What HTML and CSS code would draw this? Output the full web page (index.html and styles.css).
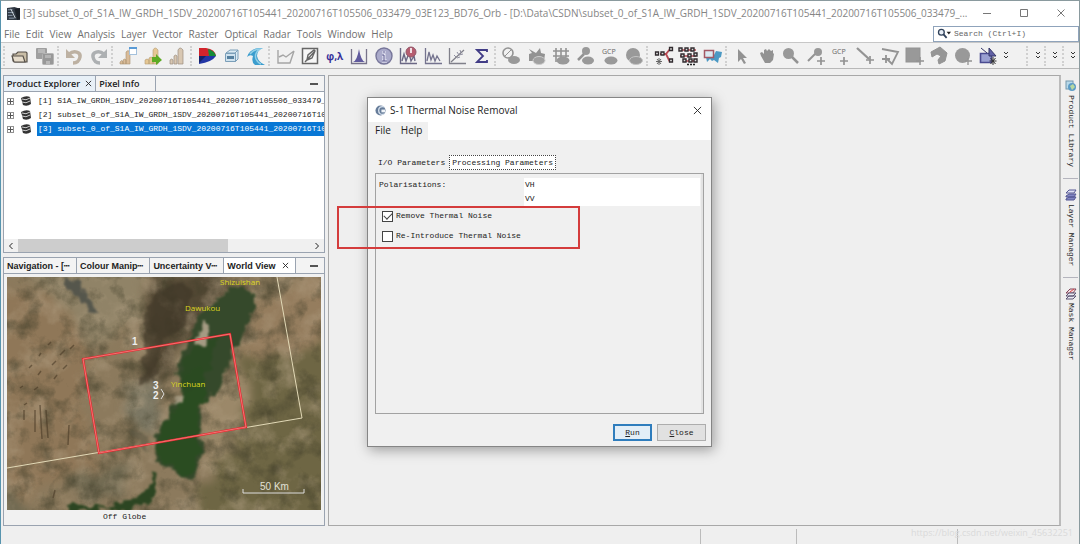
FILE: index.html
```html
<!DOCTYPE html>
<html lang="en">
<head>
<meta charset="utf-8">
<title>S-1 Thermal Noise Removal</title>
<link rel="stylesheet" href="styles.css">
</head>
<body>
<div class="app">
  <header class="titlebar">
    <svg class="app-icon" viewBox="0 0 14 14"><path d="M0 1l8-1 6 2v12H0z" fill="#333b45"/><path d="M8 2l6-1v12l-3 1z" fill="#1b2028"/><path d="M1 3h5M1 6h6M1 9h5M2 12h6" stroke="#91a0b3"/><path d="M4 2l5 10" stroke="#d6dee6"/></svg>
    <span class="title-text">[3] subset_0_of_S1A_IW_GRDH_1SDV_20200716T105441_20200716T105506_033479_03E123_BD76_Orb - [D:\Data\CSDN\subset_0_of_S1A_IW_GRDH_1SDV_20200716T105441_20200716T105506_033479_...</span>
    <div class="window-controls">
      <button aria-label="Minimize"><svg viewBox="0 0 10 10"><path d="M1 5.500h8"/></svg></button>
      <button aria-label="Maximize"><svg viewBox="0 0 10 10"><path d="M1.500 1.500h7v7h-7z"/></svg></button>
      <button aria-label="Close window"><svg viewBox="0 0 10 10"><path d="M1.500 1.500l7 7M8.500 1.500l-7 7"/></svg></button>
    </div>
  </header>

  <nav class="menubar">
    <button>File</button><button>Edit</button><button>View</button><button>Analysis</button><button>Layer</button><button>Vector</button><button>Raster</button><button>Optical</button><button>Radar</button><button>Tools</button><button>Window</button><button>Help</button>
    <label class="search">
      <svg viewBox="0 0 16 12"><circle cx="5" cy="4.500" r="3.300" fill="#e8eef6" stroke="#2f4059" stroke-width="1.500"/><path d="M7.500 7l3.500 4" stroke="#2f4059" stroke-width="2"/><path d="M11 4h5l-2.500 3z" fill="#222"/></svg>
      <input type="text" placeholder="Search (Ctrl+I)" aria-label="Search">
    </label>
  </nav>

  <div class="toolbar">
    <span class="grip"></span>
    <div class="group g2">
      <button aria-label="Open product"><svg viewBox="0 0 20 20"><path d="M3 15V8h3l2-2h8l1 1v9H5z" fill="#c9bda6" stroke="#57514a" stroke-width="1.200"/><path d="M2 10h11l2 6H4z" fill="#e6dccb" stroke="#57514a" stroke-width="1.200"/></svg></button>
      <button aria-label="Save all"><svg viewBox="0 0 20 20"><rect x="1" y="2" width="11" height="11" rx="1" fill="#9f9f9f"/><rect x="3" y="3" width="7" height="4" fill="#b9b9b9"/><rect x="7.500" y="7.500" width="11" height="11" rx="1" fill="#989898" stroke="#b4b4b4"/><rect x="10" y="9" width="6" height="3" fill="#b4b4b4"/><rect x="11" y="15" width="4" height="3" fill="#b8b8b8"/></svg></button>
    </div>
    <span class="grip"></span>
    <div class="group g2">
      <button aria-label="Undo"><svg viewBox="0 0 20 20"><path d="M5 8c5-4 12-2 11 3s-4 6-7 6" fill="none" stroke="#bdb1a2" stroke-width="3.500"/><path d="M2 3v9h9z" fill="#bdb1a2"/></svg></button>
      <button aria-label="Redo"><svg viewBox="0 0 20 20"><path d="M15 8C10 4 3 6 4 11s4 6 7 6" fill="none" stroke="#adb0b2" stroke-width="3.500"/><path d="M18 3v9H9z" fill="#adb0b2"/></svg></button>
    </div>
    <span class="grip"></span>
    <div class="group g3">
      <button aria-label="New histogram"><svg viewBox="0 0 20 20"><path d="M2 16q2-3 3 0v2H2zM5 18v-4q2-2 3 0v4zM8 18V6q2-3 4 0v12z" fill="#d9bb98" stroke="#a89070" stroke-width=".6"/><rect x="11.500" y="1.500" width="7" height="7" fill="#fff" stroke="#a4c1dc"/><path d="M11 2h8" stroke="#5b9bd5" stroke-width="2"/></svg></button>
      <button aria-label="Import"><svg viewBox="0 0 20 20"><path d="M2 18v-4q2-2 4 0v4zM6 18v-6q2-2 4 0v6zM10 18V4q2-4 5 0v14z" fill="#e5c793" stroke="#b39b74" stroke-width=".6"/><path d="M9 11h4V8l6 6-6 5v-3H9z" fill="#5dab24"/></svg></button>
      <button aria-label="Export"><svg viewBox="0 0 20 20"><path d="M3 18v-4q2-2 3 0v4zM7 18v-8q2-2 3 0v8zM11 18V4q2-4 5 0v14z" fill="#d8c7b2" stroke="#9b8e80" stroke-width=".7"/></svg></button>
    </div>
    <span class="grip"></span>
    <div class="group g3">
      <button aria-label="RGB image"><svg viewBox="0 0 20 20"><path d="M2 2h7q9 1 10 8H2z" fill="#d2242c"/><path d="M11 3q7 2 8 7h-7z" fill="#168b37"/><path d="M2 10h17q-4 6-17 8z" fill="#2336a5"/><path d="M2 10h7l-7 7z" fill="#152268"/></svg></button>
      <button aria-label="3D cube"><svg viewBox="0 0 20 20"><path d="M4 7l4-3h8l-3 3zM13 7l3-3v9l-3 3z" fill="#dcebf3" stroke="#7b9fb9"/><path d="M3.500 7.500h10v8h-10z" fill="#cfe2ee" stroke="#7b9fb9"/><path d="M5 10h7v3H5z" fill="#55809f"/></svg></button>
      <button aria-label="Water tool"><svg viewBox="0 0 20 20"><path d="M1 11Q4 1 17 2q-6 2-6 8 1 6 8 9H9q-4-3-2-9-3-2-6 1z" fill="#3b9dce"/><path d="M4 8q4-5 10-5-6 4-4 10 2 4 5 5" fill="none" stroke="#93d0e8" stroke-width="1.500"/></svg></button>
    </div>
    <span class="grip"></span>
    <div class="group g9">
      <button aria-label="Profile plot"><svg viewBox="0 0 20 20"><path d="M2 4v13h12l4-12M3 11l4-2 3 2 8-6" fill="none" stroke="#a5a5a5" stroke-width="1.400"/></svg></button>
      <button aria-label="Geometry"><svg viewBox="0 0 20 20"><rect x="2.500" y="2.500" width="15" height="15" fill="#f7f7f7" stroke="#666" stroke-width="1.500"/><path d="M5 16L15 5M7 14l1-5 6-5 1 1-3 7z" fill="none" stroke="#666" stroke-width="1.400"/></svg></button>
      <button aria-label="Geo coding" class="phi">φ,λ</button>
      <button aria-label="Histogram"><svg viewBox="0 0 20 20"><path d="M4 16q4-1 6-13 2 12 6 13z" fill="#605a9e"/><path d="M2.500 3v14.500h15V3" fill="none" stroke="#77738a" stroke-width="1.300"/></svg></button>
      <button aria-label="Information"><svg viewBox="0 0 20 20"><circle cx="10" cy="10" r="8" fill="#aaaaca" stroke="#77769a" stroke-width="1.400"/><path d="M10 5v2M8 9h2v6M8 15h5" stroke="#e9e9f6" stroke-width="3"/><path d="M10 5v2M8 9h2v6M8 15h5" stroke="#57558a"/></svg></button>
      <button aria-label="Density plot"><svg viewBox="0 0 20 20"><path d="M2.500 2v15.500H19M4 15l2-7 2 7 3-8 2 8 3-5 1 5" fill="none" stroke="#6b6885" stroke-width="1.400"/><circle cx="13" cy="6" r="5" fill="#b65d70" stroke="#915668"/><path d="M13 2v5" stroke="#f1dfe4" stroke-width="2"/></svg></button>
      <button aria-label="Spectrum"><svg viewBox="0 0 20 20"><path d="M2.500 2v15.500H19M4 15l2-9 2 8 2-5 2 6 2-5 3 5" fill="none" stroke="#74738e" stroke-width="1.300"/></svg></button>
      <button aria-label="Scatter plot"><svg viewBox="0 0 20 20"><path d="M2.500 2v15.500H19M4 16L17 4" fill="none" stroke="#80808a" stroke-width="1.300"/><path d="M7 9l2 2M10 6l2 3M13 4l1 3M10 12l3-1M12 9l4-1" stroke="#8f8fa0"/></svg></button>
      <button aria-label="Statistics"><svg viewBox="0 0 20 20"><path d="M15 6V4H5l6 6-6 6h10v-2" fill="none" stroke="#413c86" stroke-width="1.800"/></svg></button>
    </div>
    <span class="grip"></span>
    <div class="group g6 muted">
      <button aria-label="No data overlay"><svg viewBox="0 0 20 20"><circle cx="7" cy="7" r="5" fill="none" stroke-width="1.600"/><path d="M3 11l8-8"/><ellipse cx="13" cy="14" rx="6" ry="4" fill="#999" stroke="none"/></svg></button>
      <button aria-label="Geometry overlay"><svg viewBox="0 0 20 20"><path d="M3 8l3-1-3-4 7 4 4-5 1 5 4 1-1 7H3z" fill="#929292" stroke="none"/><ellipse cx="13" cy="14.500" rx="6" ry="4" fill="#a0a0a0" stroke="#ccc"/></svg></button>
      <button aria-label="Graticule overlay"><svg viewBox="0 0 20 20"><path d="M2 5h16M2 10h16M5 2v14M10 2v10M15 2v9" stroke-width="1.600"/><ellipse cx="12" cy="14.500" rx="6.500" ry="4" fill="#999" stroke="none"/></svg></button>
      <button aria-label="Pin overlay"><svg viewBox="0 0 20 20"><circle cx="11" cy="5" r="4" fill="#999" stroke="none"/><path d="M9 8l-6 6" stroke-width="2.500"/><ellipse cx="13" cy="14.500" rx="6" ry="4" fill="#999" stroke="none"/></svg></button>
      <button aria-label="GCP overlay"><svg viewBox="0 0 20 20"><text x="2" y="8" class="gcp">GCP</text><ellipse cx="11" cy="14.500" rx="6.500" ry="4" fill="#999" stroke="none"/></svg></button>
      <button aria-label="Mask overlay"><svg viewBox="0 0 20 20"><circle cx="9" cy="9" r="7" fill="#999" stroke="none"/><ellipse cx="12" cy="14.500" rx="6.500" ry="4" fill="#999" stroke="#c4c4c4"/></svg></button>
    </div>
    <span class="grip"></span>
    <div class="group g3">
      <button aria-label="Graph builder"><svg viewBox="0 0 20 20"><path d="M6 8h6l4-5M12 8l4 8" fill="none" stroke="#b84852" stroke-width="1.800"/><g fill="#ddd" stroke="#302a2e" stroke-width="1.300"><path d="M1.500 6h3v3h-3zM7 6h3v3H7zM15.500 1.500h3v3h-3zM15.500 13h3v3h-3z"/></g><path d="M5 12v7M2 15.500h6M3 13l4 5M7 13l-4 5" stroke="#666"/></svg></button>
      <button aria-label="Batch processing"><svg viewBox="0 0 20 20"><path d="M2 4h16M2 10h16M7 15h12" stroke="#b84852" stroke-width="1.500"/><g fill="#ddd" stroke="#302a2e" stroke-width="1.400"><path d="M1 2h3v3H1zM7 2h3v3H7zM13 2h3v3h-3zM3 8h3v3H3zM10 8h3v3h-3zM16 7h3v3h-3zM5 13h3v3H5zM11 13h3v3h-3zM16 13h3v3h-3z"/></g><path d="M9 18.500h8" stroke="#222" stroke-width="1.500" stroke-dasharray="2 1"/></svg></button>
      <button aria-label="World map"><svg viewBox="0 0 20 20"><path d="M3 11l4-2 3 2 3-6 6 1-1 5-2 1-1 5-4-3-2 1-2-2-3 3z" fill="#4b99c4"/><rect x="1.500" y="4.500" width="9" height="7" fill="#dbe9f1" stroke="#a35864" stroke-width="1.500"/></svg></button>
    </div>
    <span class="grip"></span>
    <div class="group g11 muted">
      <button aria-label="Select"><svg viewBox="0 0 20 20"><path d="M6 3v13l3-3 3 5 2-1-3-5h4z" fill="#929292" stroke="none"/></svg></button>
      <button aria-label="Pan"><svg viewBox="0 0 20 20"><path d="M4 10l-1-3 2-1 2 2V4l2-1 1 2 2-2 2 2 2-1v3l1 1-1 6-3 3H8z" fill="#929292" stroke="none"/></svg></button>
      <button aria-label="Zoom"><svg viewBox="0 0 20 20"><circle cx="7.500" cy="7.500" r="5.500" fill="#999" stroke="none"/><path d="M11 11l6 6" stroke-width="2.500"/></svg></button>
      <button aria-label="Pin placing"><svg viewBox="0 0 20 20"><circle cx="12" cy="6" r="4" fill="#999" stroke="none"/><path d="M9 8l-7 7" stroke-width="2"/><path d="M15 11v8M11 15h8" stroke-width="1.700"/></svg></button>
      <button aria-label="GCP placing"><svg viewBox="0 0 20 20"><text x="2" y="8" class="gcp">GCP</text><path d="M14 11v8M10 15h8" stroke-width="1.700"/></svg></button>
      <button aria-label="Draw line"><svg viewBox="0 0 20 20"><path d="M2 2l12 11" stroke-width="2.300"/><path d="M15 10v8M11 14h8" stroke-width="1.700"/></svg></button>
      <button aria-label="Draw polyline"><svg viewBox="0 0 20 20"><path d="M2 3l16 3-6 12-5-5M6 9v8M2 13h8" fill="none" stroke-width="1.800"/></svg></button>
      <button aria-label="Draw rectangle"><svg viewBox="0 0 20 20"><rect x="2" y="2" width="14" height="14" fill="#999"/><path d="M16 11v8M12 15h8" stroke-width="1.500"/></svg></button>
      <button aria-label="Draw polygon"><svg viewBox="0 0 20 20"><path d="M2 6l9-5 7 6-2 8-6 3-1-4 3-4-4-2-5 3z" fill="#969696"/></svg></button>
      <button aria-label="Draw ellipse"><svg viewBox="0 0 20 20"><circle cx="9.500" cy="9.500" r="7.500" fill="#999" stroke="none"/><path d="M15 12v7M12 15h7" stroke-width="1.300"/></svg></button>
      <button aria-label="New vector layer"><svg viewBox="0 0 20 20"><path d="M2.500 7.500h11v9h-11z" fill="#9aa0d2" stroke="#4b4c91" stroke-width="1.600"/><path d="M3 2l6 5M11 2l7 8h-7z" fill="#6262a6" stroke="#343668"/><path d="M15 11v8M11.500 15h7M12.500 12l5 6M17.500 12l-5 6" stroke="#333" stroke-width="1"/></svg></button>
    </div>
    <div class="overflow">
      <button aria-label="More tools"><svg viewBox="0 0 8 12"><path d="M2 2l2 2 2-2M2 6l2 2 2-2"/></svg></button>
      <span class="grip"></span><button aria-label="More views"><svg viewBox="0 0 8 12"><path d="M2 2l2 2 2-2M2 6l2 2 2-2"/></svg></button>
      <span class="grip"></span><button aria-label="More layers"><svg viewBox="0 0 8 12"><path d="M2 2l2 2 2-2M2 6l2 2 2-2"/></svg></button>
      <span class="grip"></span><button aria-label="More actions"><svg viewBox="0 0 8 12"><path d="M2 2l2 2 2-2M2 6l2 2 2-2"/></svg></button>
    </div>
  </div>

  <main class="workspace">
    <div class="sidebar">
      <section class="panel explorer">
        <div class="tabs top-tabs">
          <button class="tab active">Product Explorer <svg class="x" viewBox="0 0 8 8"><path d="M1 1l6 6M7 1L1 7"/></svg></button>
          <button class="tab wide">Pixel Info</button>
          <button class="collapse" aria-label="Minimize panel"></button>
        </div>
        <ul class="tree">
          <li><button class="expand" aria-label="Expand"></button><svg class="db" viewBox="0 0 12 12"><path d="M1 3q5-3 9-1l1 7q-4 3-8 1z" fill="#333"/><path d="M2 4q4 2 8-1M2 7q4 2 8-1" stroke="#ccc" fill="none"/></svg><span>[1] S1A_IW_GRDH_1SDV_20200716T105441_20200716T105506_033479_0</span></li>
          <li><button class="expand" aria-label="Expand"></button><svg class="db" viewBox="0 0 12 12"><path d="M1 3q5-3 9-1l1 7q-4 3-8 1z" fill="#333"/><path d="M2 4q4 2 8-1M2 7q4 2 8-1" stroke="#ccc" fill="none"/></svg><span>[2] subset_0_of_S1A_IW_GRDH_1SDV_20200716T105441_20200716T105</span></li>
          <li class="selected"><button class="expand" aria-label="Expand"></button><svg class="db" viewBox="0 0 12 12"><path d="M1 3q5-3 9-1l1 7q-4 3-8 1z" fill="#333"/><path d="M2 4q4 2 8-1M2 7q4 2 8-1" stroke="#ccc" fill="none"/></svg><span>[3] subset_0_of_S1A_IW_GRDH_1SDV_20200716T105441_20200716T105</span></li>
        </ul>
        <div class="scrollbar">
          <button aria-label="Scroll left"><svg viewBox="0 0 8 8"><path d="M5.500 1l-3 3 3 3"/></svg></button>
          <div class="track"><div class="thumb"></div></div>
          <button aria-label="Scroll right"><svg viewBox="0 0 8 8"><path d="M2.500 1l3 3-3 3"/></svg></button>
        </div>
      </section>

      <section class="panel world">
        <div class="tabs bottom-tabs">
          <button class="tab">Navigation - [┅</button>
          <button class="tab">Colour Manip┅</button>
          <button class="tab">Uncertainty V┅</button>
          <button class="tab current">World View <svg class="x" viewBox="0 0 8 8"><path d="M1 1l6 6M7 1L1 7"/></svg></button>
          <button class="collapse" aria-label="Minimize panel"></button>
        </div>
        <svg class="map" viewBox="7 277 314 233" preserveAspectRatio="xMidYMid slice" role="img" aria-label="Satellite map">
          <defs>
            <filter id="rough" x="-10%" y="-10%" width="120%" height="120%" color-interpolation-filters="sRGB"><feTurbulence type="fractalNoise" baseFrequency=".09" numOctaves="4" seed="4"/><feDisplacementMap in="SourceGraphic" scale="14" xChannelSelector="R" yChannelSelector="G"/><feGaussianBlur stdDeviation=".8"/></filter>
            <filter id="soft" x="-20%" y="-20%" width="140%" height="140%" color-interpolation-filters="sRGB"><feTurbulence type="fractalNoise" baseFrequency=".05" numOctaves="4" seed="9"/><feDisplacementMap in="SourceGraphic" scale="28" xChannelSelector="R" yChannelSelector="G"/><feGaussianBlur stdDeviation="4"/></filter>
            <filter id="dark" x="0" y="0" width="100%" height="100%" color-interpolation-filters="sRGB"><feTurbulence type="fractalNoise" baseFrequency=".05" numOctaves="5" seed="12"/><feColorMatrix values="0 0 0 0 .25  0 0 0 0 .24  0 0 0 0 .16  2.600 0 0 0 -1.200"/></filter>
            <filter id="light" x="0" y="0" width="100%" height="100%" color-interpolation-filters="sRGB"><feTurbulence type="fractalNoise" baseFrequency=".04" numOctaves="5" seed="31"/><feColorMatrix values="0 0 0 0 .7  0 0 0 0 .63  0 0 0 0 .52  0 2.600 0 0 -1.200"/></filter>
          </defs>
          <rect x="7" y="277" width="314" height="233" fill="#8c7a5d"/>
          <g filter="url(#soft)">
            <path d="M-10 290l65 0 40 60-15 50 20 60-110 60z" fill="#8f7758"/>
            <path d="M20 260l130 0-10 60-40 30-40-40z" fill="#908367"/>
            <path d="M240 355l100-20v200l-160 0 30-60z" fill="#6e6644"/>
            <path d="M258 300l70-30v70l-70 20-14-10z" fill="#957d5e"/>
            <path d="M155 270l75 0-15 48-40 35-20 45-14-10z" fill="#544935"/>
            <path d="M125 385l34 0 0 35-22 15z" fill="#7b7763"/>
            <path d="M203 405l40-40 5 60-40 45z" fill="#9b8869"/>
            <path d="M-5 465l40 60H-5zM70 475l60-10 0 30-50 5z" fill="#716a52"/>
          </g>
          <rect x="7" y="277" width="314" height="233" filter="url(#light)" opacity=".5"/>
          <rect x="7" y="277" width="314" height="233" filter="url(#dark)" opacity=".6"/>
          <g filter="url(#rough)">
            <path d="M160 290l24-8 8 10-5 28-26 25-7 35-14 5 5-34-2-25 6-24z" fill="#3d3626" opacity=".6"/>
            <path d="M230 286l18 2 8 16-8 20-10 19-8 17-10 25-19 22 1 46-5 21-9 7-14-10-17-8-1-30 14-22 10-12 1-18-6-8 12-28 7-22 10-15 18-11z" fill="#35492b"/>
            <path d="M185 375l20-12 2 35-10 14 2 42-4 16-9 7-13-10-14-8 0-28 12-18 10-8z" fill="#284c20" opacity=".85"/>
            <path d="M183 361l20-22 12-2-4 34-20 20-12-3z" fill="#2b4a22" opacity=".8"/>
            <path d="M152 470l5 3-2 20-14 13-20 4-20 0 20-7 22-8 8-12zM68 512l6-8 20 0 10 6z" fill="#2c4522"/>
            <path d="M203 320l6 5-3 20-5 4-4-7zM178 395l6 0-2 11-6 1z" fill="#a59b83"/>
            <path d="M65 277l14 5 14 22 5 10-8 0-10-18-14-8z" fill="#55564c"/>
            <path d="M126 430l15-2 8 24-14-12z" fill="#5e5845" opacity=".6"/>
          </g>
          <path d="M24 405l3-2M35 410v22M40 405l2 34M46 410l2 28M69 425l-1 20M24 410v10M29 368l3-3M38 375l3-4M52 365l4-4M60 355l5-5M20 388l3-2M34 390l4-3M70 349l4-4M39 356l2-3M54 379l3-4M63 369l4-4M48 345l3-3M53 498l2-8" stroke="#493a26" stroke-width="1.500" opacity=".6"/>
          <path d="M277 277l25 141L7 468" fill="none" stroke="#e2d9b7"/>
          <path d="M83 359l147-25 16 93-147 26z" fill="none" stroke="#e8252d" stroke-width="2.200"/>
          <path d="M83 359l147-25 16 93-147 26z" fill="none" stroke="#f5a9a1" stroke-width=".6"/>
          <g class="place"><text x="220" y="285">Shizuishan</text><text x="185" y="311">Dawukou</text><text x="171" y="387">Yinchuan</text></g>
          <g class="marker"><text x="132" y="345">1</text><text x="153" y="389">3</text><text x="153" y="399">2</text></g>
          <path d="M161 389l3 5-3 5M243 489v4h61v-4" fill="none" stroke="#ddd"/>
          <text class="scale" x="260" y="490">50 Km</text>
        </svg>
        <div class="globe-status">Off Globe</div>
      </section>
    </div>

    <div class="desktop"></div>

    <aside class="rail">
      <button><svg viewBox="0 0 12 12"><rect x="1" y="1" width="7" height="8" fill="#b8d9ea" stroke="#7597ac"/><circle cx="7" cy="7" r="4" fill="#5b9bc6"/><path d="M5 6l3-2 2 3-3 3z" fill="#b7d9a0"/></svg>Product Library</button>
      <button><svg viewBox="0 0 12 12"><path d="M1 4l3-3h7l-2 3z" fill="#dfe1f6" stroke="#555793"/><path d="M1 7l3-2h7l-2 3H1zM1 10l3-2h7l-2 3H1z" fill="#8287c4" stroke="#555793"/></svg>Layer Manager</button>
      <button><svg viewBox="0 0 12 12"><path d="M1 5l4-4h6L8 5z" fill="#f3dfe4" stroke="#80475b"/><path d="M1 8l3-3h7L8 8zM1 11l3-3h7l-3 3z" fill="#e9eaf3" stroke="#5d5573"/><path d="M5 4l4-3" stroke="#d44"/></svg>Mask Manager</button>
    </aside>
  </main>

  <footer class="statusbar"><span></span><span></span><span></span><span></span><div class="watermark">https://blog.csdn.net/weixin_45632251</div></footer>

  <section class="dialog" role="dialog" aria-labelledby="dialog-title">
    <header class="dialog-title">
      <svg viewBox="0 0 12 12"><circle cx="6" cy="6" r="5.500" fill="#667c99"/><path d="M10 2Q4 1 4 6t6 4" fill="none" stroke="#d5e0ed" stroke-width="1.500"/><path d="M7 5h4v3H7z" fill="#eef3f8"/></svg>
      <h1 id="dialog-title">S-1 Thermal Noise Removal</h1>
      <button aria-label="Close dialog"><svg viewBox="0 0 10 10"><path d="M1 1l8 8M9 1L1 9"/></svg></button>
    </header>
    <nav class="dialog-menu"><div><button>File</button><button>Help</button></div></nav>
    <div class="dialog-body">
      <div class="dialog-tabs"><button>I/O Parameters</button><button class="on">Processing Parameters</button></div>
      <form class="params">
        <div class="pol"><label for="pol">Polarisations:</label><select id="pol" multiple size="2"><option>VH</option><option>VV</option></select></div>
        <label class="check"><input type="checkbox" checked>Remove Thermal Noise</label>
        <label class="check"><input type="checkbox">Re-Introduce Thermal Noise</label>
      </form>
      <div class="actions"><button class="primary"><u>R</u>un</button><button><u>C</u>lose</button></div>
    </div>
    <div class="highlight"></div>
  </section>
</div>
</body>
</html>
```
FILE: styles.css
```css
* { box-sizing: border-box; }
body { margin: 0; background: #efefef; color: #222; font: 8px/14px "Liberation Mono", monospace; }
button { border: 0; padding: 0; margin: 0; background: none; color: inherit; font: inherit; white-space: nowrap; }
button svg { display: block; fill: none; stroke: currentColor; }
.app { position: relative; display: flex; flex-direction: column; min-height: 100vh; border: 1px solid #8a9a9e; border-left-color: #5794ae; border-bottom-color: #c8c8c8; overflow: hidden; }

.titlebar { display: flex; align-items: center; height: 24px; padding-left: 6px; background: #fff; color: #858585; font: 10px/16px "Open Sans", sans-serif; }
.app-icon { width: 13px; height: 13px; margin-right: 3px; flex: none; }
.title-text { flex: 1; min-width: 0; white-space: nowrap; }
.window-controls { display: flex; }
.window-controls button { width: 37px; display: grid; place-items: center; color: #777; }
.window-controls svg { width: 10px; height: 10px; }

.menubar { display: flex; align-items: center; gap: 6px; height: 17px; padding-left: 3px; background: #fff; color: #6f6f6f; font: 10px/16px "Open Sans", sans-serif; }
.search { display: flex; align-items: center; width: 146px; height: 16px; margin-left: auto; border: 1px solid #8fa3bb; background: #fff; padding-left: 3px; }
.search svg { width: 14px; height: 11px; }
.search input { flex: 1; min-width: 0; border: 0; outline: 0; padding: 0 0 0 3px; background: none; font: 8px/12px "Liberation Mono", monospace; }
.search input::placeholder { color: #666; opacity: 1; }

.toolbar { display: flex; align-items: center; height: 27px; padding-left: 2px; border-top: 1px solid #c7c7c7; border-bottom: 1px solid #b8b8b8; background: #f1f1f1; }
.grip { flex: none; width: 5px; height: 20px; border-left: 2px dotted #d0d0d0; }
.group { display: flex; min-width: 0; }
.group button { flex: 1; min-width: 0; display: grid; place-items: center; }
.group svg { width: 20px; height: 20px; stroke: none; overflow: visible; }
.g2 { flex: 2 1 0; }
.g3 { flex: 3 1 0; }
.g6 { flex: 6 1 0; }
.g9 { flex: 9 1 0; }
.g11 { flex: 11 1 0; }
.muted svg { stroke: #939393; }
.gcp { font: 7px "Open Sans", sans-serif; fill: #666; stroke: none; }
.phi { color: #35309a; font: bold 10px/20px "Open Sans", sans-serif; }
.overflow { display: flex; align-items: center; justify-content: space-between; width: 79px; padding: 0 2px; color: #333; }
.overflow svg { width: 8px; height: 12px; }
.overflow button:first-child { margin-right: 14px; }

.workspace { flex: 1; display: flex; padding: 6px 1px 1px 2px; }
.sidebar { width: 322px; flex: none; display: flex; flex-direction: column; gap: 4px; }
.panel { display: flex; flex-direction: column; border: 1px solid #9aa3b0; min-width: 0; }
.explorer { flex: 1; min-height: 178px; background: #fff; }
.tabs { display: flex; height: 16px; border-bottom: 1px solid #9aa3b0; background: #f3f3f3; }
.tab { display: flex; align-items: center; gap: 5px; padding: 0 3px; border-right: 1px solid #9aa3b0; }
.top-tabs { font: 600 9px/14px "Open Sans", sans-serif; }
.bottom-tabs { font: bold 9px/14px "Liberation Sans", "DejaVu Sans", sans-serif; }
.bottom-tabs .tab { flex: 1 1 auto; }
.tab.active { background: #e8f0f7; }
.tab.current { gap: 6px; background: #fff; }
.tab.wide { width: 60px; }
.x { width: 7px; height: 7px; }
.collapse { width: 28px; flex: none; margin-left: auto; padding-left: 8px; display: grid; place-items: center; }
.collapse::before { content: ""; width: 8px; height: 2px; background: #555; }
.tree { flex: 1; list-style: none; margin: 0; padding: 2px 0 0 3px; }
.tree li { display: flex; align-items: center; height: 14px; }
.tree span { flex: 1; min-width: 0; overflow: hidden; white-space: nowrap; padding-left: 1px; }
.selected span { background: #0877d5; color: #fff; }
.expand { position: relative; width: 7px; height: 7px; border: 1px solid #929292; flex: none; }
.expand::before { content: ""; position: absolute; left: 0; top: 2px; width: 5px; height: 1px; background: #555; }
.expand::after { content: ""; position: absolute; left: 2px; top: 0; width: 1px; height: 5px; background: #555; }
.db { width: 12px; height: 12px; margin: 0 5px 0 6px; flex: none; }
.scrollbar { display: flex; height: 13px; background: #f0f0f0; }
.scrollbar button { width: 14px; display: grid; place-items: center; }
.scrollbar svg { width: 8px; height: 8px; }
.track { flex: 1; display: flex; }
.thumb { width: 72%; background: #cdcdcd; }
.world { flex: none; height: 269px; background: #f1f1f1; }
.map { display: block; flex: 1; min-height: 0; margin: 3px 3px 0; }
.place text { font: 8px "Open Sans", sans-serif; fill: #dcd61c; }
.marker text { font: bold 10px "Liberation Sans", sans-serif; fill: #eee; }
.scale { font: 10px "Liberation Sans", sans-serif; fill: #e0e0d6; }
.globe-status { height: 15px; padding-left: 99px; }

.desktop { flex: 1; margin-left: 3px; border: 1px solid #a8a8a8; border-right: 2px solid #bbb; }
.rail { width: 17px; display: flex; flex-direction: column; padding-left: 2px; }
.rail button { display: flex; align-items: center; justify-content: flex-start; gap: 3px; writing-mode: vertical-rl; width: 15px; height: 99px; padding-top: 10px; border-bottom: 1px solid #b4b4bd; }
.rail button:first-child { height: 104px; padding-top: 5px; }
.rail button:last-child { border-bottom: 0; }
.rail svg { width: 12px; height: 12px; stroke: none; }

.statusbar { position: relative; display: flex; height: 17px; padding-top: 2px; }
.statusbar span { flex: 160; border-left: 1px solid #bbb; }
.statusbar span:nth-child(1) { flex: 702; border: 0; }
.statusbar span:nth-child(2) { flex: 96; }
.statusbar span:nth-child(4) { flex: 122; }
.watermark { position: absolute; right: 6px; top: 0; color: #dadada; font: 9px/12px "Open Sans", sans-serif; }

.dialog { position: absolute; left: 366px; top: 96px; width: 345px; display: flex; flex-direction: column; border: 1px solid #858585; background: #f0f0f0; box-shadow: 2px 3px 12px rgba(0, 0, 0, .35); }
.dialog-title { display: flex; align-items: center; height: 24px; padding: 0 9px 0 7px; background: #fff; }
.dialog-title svg { width: 11px; height: 11px; }
.dialog-title h1 { flex: 1; margin: 0 0 0 4px; font: 10px/16px "Open Sans", sans-serif; }
.dialog-title button svg { width: 9px; height: 9px; }
.dialog-menu { background: #fff; height: 18px; }
.dialog-menu div { display: inline-flex; gap: 10px; height: 18px; padding: 0 6px 0 7px; background: #f0f0f0; font: 10px/16px "Open Sans", sans-serif; }
.dialog-menu button { height: 16px; }
.dialog-body { display: flex; flex-direction: column; padding: 15px 7px 5px; }
.dialog-tabs { display: flex; align-items: flex-start; gap: 4px; height: 18px; padding-left: 3px; }
.dialog-tabs button { height: 16px; line-height: 16px; }
.dialog-tabs .on { height: 15px; padding: 0 2px; border: 1px dotted #444; background: #fff; line-height: 13px; }
.params { display: flex; flex-direction: column; min-height: 241px; padding: 4px 3px; border: 1px solid #a2a2a2; box-shadow: inset -2px 0 #e3e3e3; }
.pol { display: grid; grid-template-columns: 145px 1fr; height: 28px; }
.pol select { border: 0; padding: 0; margin: 0; outline: 0; overflow: hidden; background: #fff; font: inherit; color: inherit; height: 28px; border-radius: 0; }
.pol option { padding: 2px 1px 0; height: 14px; min-height: 14px; line-height: 12px; }
.check { display: flex; align-items: center; gap: 3px; height: 20px; padding-left: 3px; }
.check input { appearance: none; width: 11px; height: 11px; margin: 0; border: 1px solid #444; background: #fff; display: grid; place-items: center; }
.check input:checked::before { content: ""; width: 7px; height: 4px; border: solid #444; border-width: 0 0 1px 1px; transform: rotate(-45deg) translate(1px, -1px); }
.actions { display: flex; justify-content: flex-end; gap: 5px; padding-top: 10px; margin-right: -2px; }
.actions button { width: 49px; height: 17px; border: 1px solid #adadad; background: #e1e1e1; }
.actions .primary { width: 39px; border: 2px solid #2f7dbd; line-height: 12px; background: #e3eef7; }
.highlight { position: absolute; left: -31px; top: 108px; width: 243px; height: 43px; border: 2px solid #d43c3c; pointer-events: none; }
```
